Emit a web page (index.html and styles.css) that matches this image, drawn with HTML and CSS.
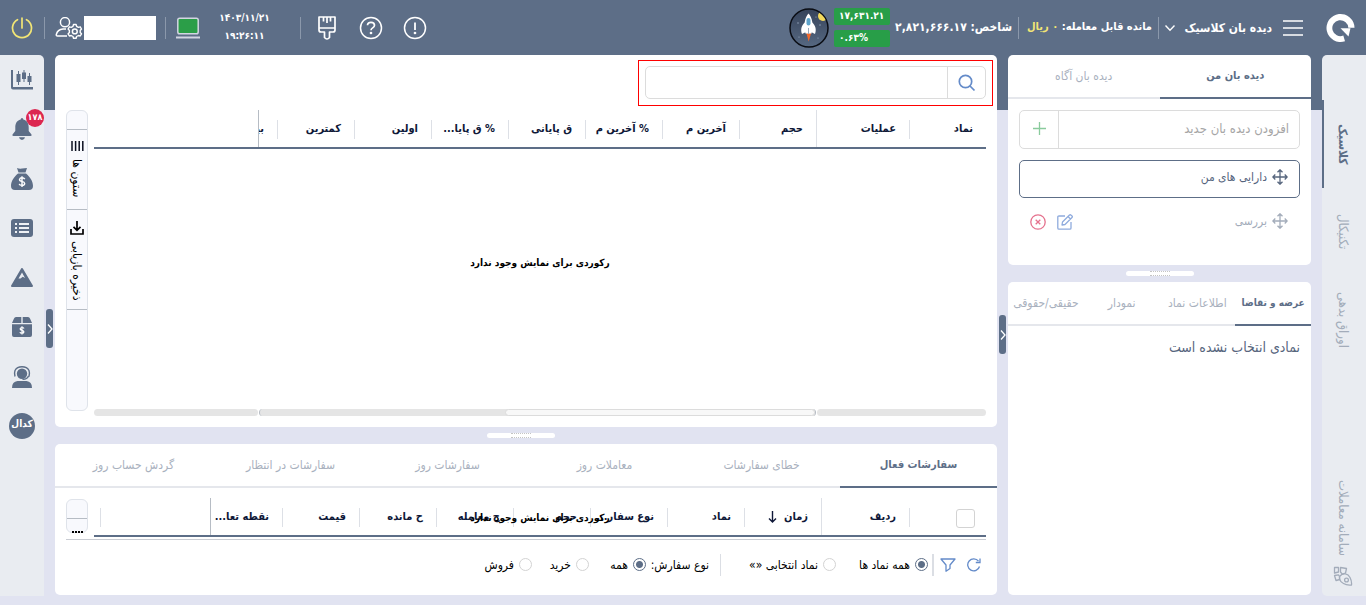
FILE: index.html
```
<!DOCTYPE html>
<html lang="fa" dir="rtl">
<head>
<meta charset="utf-8">
<meta name="viewport" content="width=device-width, initial-scale=1">
<title>دیده بان کلاسیک</title>
<link rel="stylesheet" href="styles.css">
</head>
<body>
<div class="app">
  <header class="topbar">
    <a class="logo" href="#" aria-label="آگاه">
      <svg width="30" height="30" viewBox="0 0 30 30" fill="#fff"><path d="M20 28.200A14 14 0 1 1 29.500 14.800L23.300 14.800A8 8 0 1 0 18.300 22.600Z"/><path d="M15.500 15.300H25.500L23.500 23.500Z"/></svg>
    </a>
    <button class="icon-btn menu" aria-label="منو"><svg width="20" height="18" viewBox="0 0 20 18" stroke="#fff" stroke-width="1.600"><path d="M0 2H20M0 9H20M0 16H20"/></svg></button>
    <button class="view-select">دیده بان کلاسیک<svg width="12" height="8" viewBox="0 0 12 8" fill="none" stroke="#fff" stroke-width="1.400"><path d="M1.500 1.500 6 6.200 10.500 1.500"/></svg></button>
    <div class="balance">مانده قابل معامله: <span class="amount">۰ ریال</span></div>
    <div class="index">شاخص: ۲,۸۲۱,۶۶۶.۱۷</div>
    <div class="badges"><span class="badge">۱۷,۶۳۱.۲۱</span><span class="badge">۰.۶۳%</span></div>
    <svg class="rocket" width="40" height="40" viewBox="0 0 40 40"><defs><linearGradient id="sky" x2="0" y2="1"><stop offset="0" stop-color="#36435a"/><stop offset="1" stop-color="#566881"/></linearGradient><clipPath id="disc"><circle cx="20" cy="20" r="18.500"/></clipPath></defs><circle cx="20" cy="20" r="19" fill="url(#sky)" stroke="#0a0d14" stroke-width="1.500"/><circle cx="34" cy="8" r="5" fill="#f3d95b" clip-path="url(#disc)"/><g fill="#9fb0c6"><circle cx="9" cy="15" r=".7"/><circle cx="27" cy="9" r=".6"/><circle cx="31" cy="17" r=".7"/><circle cx="29" cy="30" r=".6"/><circle cx="10" cy="29" r=".6"/></g><path d="M17.300 25H22.200L19.700 33.500Z" fill="#f0682c"/><path d="M16.500 14C12 17.500 11.500 22 13 26L17 24ZM22.500 14C27 17.500 27.500 22 26 26L22 24Z" fill="#fff"/><path d="M19.500 5.500C23.500 10 24.500 17 22.500 25.500H16.500C14.500 17 15.500 10 19.500 5.500Z" fill="#fff"/><rect x="17.500" y="10" width="4" height="7.500" rx="2" fill="#5fa4cb"/><path d="M19.500 20V26" stroke="#9aa8ba"/></svg>
    <div class="tools">
      <button class="icon-btn" aria-label="اعلان"><svg width="24" height="24" viewBox="0 0 24 24" fill="none" stroke="#fff" stroke-width="1.500"><circle cx="12" cy="12" r="10.500"/><path d="M12 6.500V14" stroke-width="1.800"/><circle cx="12" cy="17" r=".6" fill="#fff"/></svg></button>
      <button class="icon-btn" aria-label="راهنما"><svg width="24" height="24" viewBox="0 0 24 24" fill="none" stroke="#fff" stroke-width="1.500"><circle cx="12" cy="12" r="10.500"/><path d="M8.500 9.200C8.500 5.300 15.500 5.300 15.500 9.300C15.500 12 12 11.800 12 14.200" stroke-width="1.700"/><circle cx="12" cy="17" r=".6" fill="#fff"/></svg></button>
      <button class="icon-btn" aria-label="پوسته"><svg width="24" height="24" viewBox="0 0 24 24" fill="none" stroke="#fff" stroke-width="1.700" stroke-linejoin="round"><path d="M4 1H20V14Q20 16 18 16H14.500V21.500Q12 24.500 9.500 21.500V16H6Q4 16 4 14ZM4 12H20M8.500 1.500V5.500M12 1.500V7M15.500 1.500V5.500"/></svg></button>
    </div>
    <div class="clock"><span>۱۴۰۳/۱۱/۲۱</span><span>۱۹:۲۶:۱۱</span></div>
    <div class="account">
      <svg width="26" height="22" viewBox="0 0 26 22"><rect x="2.800" y="1.300" width="20.400" height="15.400" rx="1.800" fill="#2b9e48" stroke="#d3d5e2" stroke-width="1.500"/><path d="M1 20.500H25" stroke="#d3d5e2" stroke-width="2"/></svg>
    </div>
    <div class="profile">
      <span class="name-box"></span>
      <svg width="28" height="22" viewBox="0 0 28 22" fill="none" stroke="#fff" stroke-width="1.500" stroke-linejoin="round"><ellipse cx="10" cy="5.200" rx="4.600" ry="4.600"/><path d="M12 19H2.500Q1 19 1.300 17.500Q2.500 12.500 8 12H11"/><path d="M18.500 7.500H21.100L21.600 9.300 23.400 10.300 25.200 9.800 26.500 12 25.200 13.400V15.400L26.500 16.800 25.200 19 23.400 18.500 21.600 19.500 21.100 21.300H18.500L18 19.500 16.200 18.500 14.400 19 13.100 16.800 14.400 15.400V13.400L13.100 12 14.400 9.800 16.200 10.300 18 9.300Z" stroke-width="1.400"/><circle cx="19.800" cy="14.400" r="2.400"/></svg>
    </div>
    <button class="icon-btn power" aria-label="خروج"><svg width="22" height="22" viewBox="0 0 22 22" fill="none" stroke="#f2e575" stroke-width="1.700" stroke-linecap="round"><path d="M11 1V11M6.500 2.700A9.500 9.500 0 1 0 15.500 2.700"/></svg></button>
  </header>

  <main class="workspace">
    <nav class="rail pages" aria-label="صفحات">
      <a class="page current" href="#">کلاسیک</a>
      <a class="page" href="#">تکنیکال</a>
      <a class="page" href="#">اوراق بدهی</a>
      <a class="page system" href="#"><svg width="20" height="20" viewBox="0 0 20 20" fill="none" stroke="#a3acba" stroke-width="1.300" stroke-linejoin="round"><path d="M7 10C10 6.500 15 7.500 17 11.500C18.300 14 18.800 16.500 18.500 19C15.500 19.300 12.500 18.800 10.500 17.500C6.500 15.500 5.800 12 7 10Z"/><circle cx="13.500" cy="14" r="1.900"/><path d="M7.500 1.500 13.500 2.500 12.500 7 9.300 8.200 7.500 6ZM1.500 1.500H5.500V6L1.500 7ZM1.500 9.500 5.500 8.800 6.500 10.500 6.700 13.500 3 14.500Z"/></svg><span>سامانه معاملات</span></a>
    </nav>

    <div class="column watch-column">
      <section class="card watchlists">
        <div class="tabs"><button class="tab on">دیده بان من</button><button class="tab">دیده بان آگاه</button></div>
        <div class="watch-body">
          <form class="add-form">
            <input class="add-input" type="text" placeholder="افزودن دیده بان جدید" aria-label="افزودن دیده بان جدید">
            <button class="add-btn" type="button" aria-label="افزودن"><svg width="13" height="13" viewBox="0 0 13 13" stroke="#8acb9d" stroke-width="1.300"><path d="M6.500 0V13M0 6.500H13"/></svg></button>
          </form>
          <div class="watch selected"><svg class="move" width="16" height="16" viewBox="0 0 16 16"><path d="M8 1V15M1 8H15M5.500 3.300 8 .8 10.500 3.300M5.500 12.700 8 15.200 10.500 12.700M3.300 5.500 .8 8 3.300 10.500M12.700 5.500 15.200 8 12.700 10.500"/></svg><span>دارایی های من</span></div>
          <div class="watch"><svg class="move" width="16" height="16" viewBox="0 0 16 16"><path d="M8 1V15M1 8H15M5.500 3.300 8 .8 10.500 3.300M5.500 12.700 8 15.200 10.500 12.700M3.300 5.500 .8 8 3.300 10.500M12.700 5.500 15.200 8 12.700 10.500"/></svg><span>بررسی</span>
            <div class="watch-actions">
              <button class="icon-btn" aria-label="ویرایش"><svg width="16" height="16" viewBox="0 0 16 16" fill="none" stroke="#8fabdd" stroke-width="1.300" stroke-linejoin="round"><path d="M8 2H2Q.8 2 .8 3.200V14Q.8 15.200 2 15.200H12.800Q14 15.200 14 14V8M5 11 5.500 8 12.500 1Q13.300 .4 14.200 1.300L15 2Q15.700 2.800 15 3.500L8 10.500ZM11 2.500 13.500 5"/></svg></button>
              <button class="icon-btn" aria-label="حذف"><svg width="16" height="16" viewBox="0 0 16 16" fill="none" stroke="#e5728e" stroke-width="1.300"><circle cx="8" cy="8" r="7.200"/><path d="M5.700 5.700 10.300 10.300M10.300 5.700 5.700 10.300"/></svg></button>
            </div>
          </div>
        </div>
      </section>
      <div class="splitter"><span class="grip"></span></div>
      <section class="card details">
        <div class="tabs"><button class="tab on">عرضه و تقاضا</button><button class="tab">اطلاعات نماد</button><button class="tab">نمودار</button><button class="tab">حقیقی/حقوقی</button></div>
        <p class="details-empty">نمادی انتخاب نشده است</p>
      </section>
      <button class="fold fold-watch" aria-label="جمع کردن دیده بان"><svg width="6" height="12" viewBox="0 0 6 12"><path d="M1 1.500 5 6 1 10.500"/></svg></button>
    </div>

    <div class="column market-column">
      <section class="card market">
        <div class="search-frame">
          <form class="search">
            <button class="search-btn" type="button" aria-label="جستجو"><svg width="18" height="18" viewBox="0 0 18 18" fill="none" stroke="#648bc9" stroke-width="1.700"><circle cx="7.500" cy="7.500" r="6.200"/><path d="M12 12 16.500 16.500"/></svg></button>
            <input class="search-input" type="text" aria-label="جستجوی نماد">
          </form>
        </div>
        <div class="grid-area">
          <div class="grid-main">
            <table class="grid market-grid">
              <colgroup><col class="c77"><col class="c93"><col class="c77"><col class="c77"><col class="c77"><col class="c77"><col class="c77"><col class="c77"><col class="c77"><col class="c19"><col></colgroup>
              <thead><tr><th>نماد</th><th class="pin-end">عملیات</th><th>حجم</th><th>آخرین م</th><th>% آخرین م</th><th>ق پایانی</th><th>% ق پایا...</th><th>اولین</th><th>کمترین</th><th class="pin-start">بیشترین</th><th class="bare"></th></tr></thead>
            </table>
            <p class="empty">رکوردی برای نمایش وجود ندارد</p>
            <div class="scrolls"><span class="track first"></span><span class="track mid"><span class="thumb"></span></span><span class="track last"></span></div>
          </div>
          <div class="side-tools">
            <button class="side-btn columns-btn"><svg width="13" height="10" viewBox="0 0 13 10" stroke="#0b1020" stroke-width="1.500"><path d="M1 0V10M4.600 0V10M8.200 0V10M11.800 0V10"/></svg><span>ستون ها</span></button>
            <button class="side-btn save-btn"><svg width="14" height="14" viewBox="0 0 14 14" fill="none" stroke="#000" stroke-width="1.700"><path d="M7 0V9M3.500 5.800 7 9.300 10.500 5.800M1 8V13H13V8"/></svg><span>ذخیره بازیابی</span></button>
          </div>
        </div>
      </section>
      <div class="splitter shifted"><span class="grip"></span></div>
      <section class="card orders">
        <div class="tabs"><button class="tab on">سفارشات فعال</button><button class="tab">خطای سفارشات</button><button class="tab">معاملات روز</button><button class="tab">سفارشات روز</button><button class="tab">سفارشات در انتظار</button><button class="tab">گردش حساب روز</button></div>
        <div class="orders-area">
          <div class="grid-main">
            <table class="grid orders-grid">
              <colgroup><col class="c77"><col class="c88"><col class="c77"><col class="c77"><col class="c77"><col class="c77"><col class="c77"><col class="c77"><col class="c77"><col class="c72"><col><col class="c6"></colgroup>
              <thead><tr><th><input class="check" type="checkbox" aria-label="انتخاب همه"></th><th class="pin-end">ردیف</th><th>زمان <svg class="sort" width="9" height="12" viewBox="0 0 9 12"><path d="M4.500 0V11M1 7.500 4.500 11 8 7.500"/></svg></th><th>نماد</th><th>نوع سفار...</th><th>حجم</th><th>ح معامله</th><th>ح مانده</th><th>قیمت</th><th class="pin-start">نقطه تعا...</th><th></th><th class="bare"></th></tr></thead>
            </table>
            <span class="empty-over">رکوردی برای نمایش وجود ندارد</span>
          </div>
          <div class="side-tools small"><span class="dots"></span></div>
        </div>
        <div class="filters">
          <button class="icon-btn" aria-label="بروزرسانی"><svg width="14" height="14" viewBox="0 0 14 14" fill="none" stroke="#648bc9" stroke-width="1.300"><path d="M12.500 8.500A6 6 0 1 1 11.500 3.200M13 .5V4.500H8.800"/></svg></button>
          <button class="icon-btn" aria-label="فیلتر"><svg width="16" height="14" viewBox="0 0 16 14" fill="none" stroke="#648bc9" stroke-width="1.300" stroke-linejoin="round"><path d="M1 1H15L10 7V10.500L6 13.200V7Z"/></svg></button>
          <span class="bar thick"></span>
          <label class="choice w-all"><input type="radio" name="symbols" checked>همه نماد ها</label>
          <label class="choice w-picked"><input type="radio" name="symbols">نماد انتخابی «»</label>
          <span class="bar"></span>
          <span class="kind">نوع سفارش:</span>
          <label class="choice w-kind"><input type="radio" name="side" checked>همه</label>
          <label class="choice w-kind"><input type="radio" name="side">خرید</label>
          <label class="choice w-kind"><input type="radio" name="side">فروش</label>
        </div>
      </section>
      <button class="fold fold-rail" aria-label="باز کردن منوی کناری"><svg width="6" height="12" viewBox="0 0 6 12"><path d="M1 1.500 5 6 1 10.500"/></svg></button>
    </div>

    <nav class="rail shortcuts" aria-label="میانبرها">
      <button class="shortcut" aria-label="نمودار"><svg width="22" height="20" viewBox="0 0 22 20" fill="#5d6e87"><path d="M0 0H2V17H22V19.500H2Q0 19.500 0 17.500Z"/><path d="M7 1H8V4H9.500V12H8V15H7V12H5.500V4H7ZM12.500 0H13.500V2.500H15V9H13.500V12H12.500V9H11V2.500H12.500ZM18 3H19V6H20.500V12H19V15H18V12H16.500V6H18Z"/></svg></button>
      <button class="shortcut bell" aria-label="پیام ها"><svg width="20" height="22" viewBox="0 0 20 22" fill="#5d6e87"><path d="M10 0Q11.300 0 11.300 1.500C15.500 2.500 16.700 6 16.700 9.500V13L19.500 16.500Q20 18 18.500 18H1.500Q0 18 .5 16.500L3.300 13V9.500C3.300 6 4.500 2.500 8.700 1.500Q8.700 0 10 0ZM7 19.300H13Q12.500 22 10 22T7 19.300Z"/></svg><span class="count">۱۷۸</span></button>
      <button class="shortcut" aria-label="واریز و برداشت"><svg width="22" height="22" viewBox="0 0 22 22" fill="#5d6e87"><path d="M6 0Q8.500 1 11 .5T16 0L14.500 4.500H7.500ZM7 5.500H15C19 9 22 13 22 18Q22 22 18 22H4Q0 22 0 18C0 13 3 9 7 5.500Z"/><path d="M13.800 11.200Q13 9.800 11 9.800T8.500 11.500Q8.500 13 11 13.400T13.700 15.600Q13.500 17.400 11 17.400T8.200 15.900M11 8.300V19" fill="none" stroke="#fff" stroke-width="1.400"/></svg></button>
      <button class="shortcut" aria-label="فهرست"><svg width="22" height="18" viewBox="0 0 22 18"><rect width="22" height="18" rx="3" fill="#5d6e87"/><path d="M4 5H6M4 9H6M4 13H6M8 5H18M8 9H18M8 13H18" stroke="#eef1f5" stroke-width="1.800"/></svg></button>
      <button class="shortcut" aria-label="قله"><svg width="22" height="20" viewBox="0 0 22 20"><path d="M11 1 21 18H1Z" fill="#5d6e87" stroke="#5d6e87" stroke-width="2" stroke-linejoin="round"/><path d="M11 4.500 14 10 11.800 8.800 9.500 10.500 7.500 10.500Z" fill="#e9ecf1"/></svg></button>
      <button class="shortcut" aria-label="صندوق"><svg width="20" height="20" viewBox="0 0 20 20" fill="#5d6e87"><path d="M4 0H9.300V6H0L2 1.500Q2.500 0 4 0ZM10.700 0H16Q17.500 0 18 1.500L20 6H10.700ZM0 7.200H20V18Q20 20 18 20H2Q0 20 0 18Z"/><path d="M12 11.500Q11.500 10.500 10 10.500T8.100 11.900Q8.200 13 10 13.300T11.900 14.900Q11.800 16.200 10 16.200T7.900 15.100M10 9.300V17.500" fill="none" stroke="#fff" stroke-width="1.200"/></svg></button>
      <button class="shortcut" aria-label="پشتیبانی"><svg width="20" height="22" viewBox="0 0 20 22" fill="#5d6e87"><circle cx="10" cy="7.800" r="5.200"/><path d="M3 10.500Q2 7 3 4.500Q5 .8 10 .8T17 4.500Q18 7 17 10.500M16.500 10Q15 13.500 10.500 13.300" fill="none" stroke="#5d6e87" stroke-width="1.400"/><path d="M5.500 15H14.500Q20 15.500 20 22H0Q0 15.500 5.500 15Z"/></svg></button>
      <button class="shortcut"><span class="codal">کدال</span></button>
    </nav>
  </main>
</div>
</body>
</html>
```
FILE: styles.css
```
* { box-sizing: border-box; }

:root {
  --slate: #5d6e87;
  --muted: #a9b1be;
  --line: #e5e7ec;
  --ink: #0f1838;
}

body {
  margin: 0;
  background: linear-gradient(var(--slate) 110px, #e1e3f1 110px) no-repeat #e1e3f1;
  color: var(--ink);
  font: 12px/18px "DejaVu Sans Condensed", "DejaVu Sans", sans-serif;
}

button, input { font: inherit; color: inherit; }
button { background: none; border: 0; padding: 0; cursor: pointer; }
svg { display: block; flex: none; }
p { margin: 0; }

.app { display: flex; flex-direction: column; min-height: 100vh; padding-bottom: 9px; }

/* Top bar */
.topbar { display: flex; align-items: center; height: 55px; color: #fff; font-weight: 700; font-size: 12px; white-space: nowrap; }
.icon-btn { display: flex; align-items: center; justify-content: center; }
.logo { margin-right: 11px; }
.menu { margin-right: 22px; }
.view-select { display: flex; align-items: center; justify-content: space-between; width: 108px; margin-right: 11px; }
.balance, .index { border-right: 1px solid #8b98ab; height: 22px; line-height: 20px; }
.balance { width: 140px; margin-right: 5px; padding-right: 6px; font-size: 11px; }
.amount { color: #f2e575; }
.index { width: 124px; padding-right: 6px; }
.badges { display: flex; flex-direction: column; gap: 5px; width: 56px; margin-right: 5px; }
.badge { height: 17px; padding: 0 5px; border-radius: 2px; background: #289e48; font-size: 10px; line-height: 16px; text-align: left; }
.rocket { margin-right: 5px; }
.tools { display: flex; gap: 20px; margin-right: auto; padding-left: 14px; }
.clock { display: flex; flex-direction: column; align-items: center; justify-content: center; width: 100px; height: 22px; border-right: 1px solid #8b98ab; padding: 0 12px 2px 0; font-size: 10px; }
.account { display: flex; align-items: center; height: 22px; margin-left: 9px; }
.profile { display: flex; align-items: center; gap: 1px; height: 22px; border-right: 1px solid #8b98ab; border-left: 1px solid #8b98ab; padding: 0 9px 0 10px; }
.name-box { width: 72px; height: 24px; background: #fff; }
.power { margin: 0 11px; }

/* Workspace */
.workspace { flex: 1; display: grid; grid-template-columns: 44px 303px minmax(0, 1fr) 44px; column-gap: 11px; }
.rail { background: #e9ecf1; }
.column { position: relative; display: flex; flex-direction: column; margin-bottom: 1px; }
.card { background: #fff; border-radius: 5px; }
.splitter { display: flex; align-items: center; justify-content: center; height: 17px; }
.shifted { padding-right: 10px; }
.grip { display: flex; align-items: center; justify-content: center; width: 68px; height: 5px; border-radius: 3px; background: #fff; }
.grip::after { content: ""; width: 20px; height: 3px; border: dotted #c4c4c4; border-width: 1px 0; }
.fold { position: absolute; display: flex; align-items: center; justify-content: center; width: 7px; height: 39px; border-radius: 3px; background: var(--slate); }
.fold path { fill: none; stroke: #fff; stroke-width: 1.3; }
.fold-watch { left: -9px; top: 260px; }
.fold-rail { left: -9px; top: 254px; }

/* Page rail */
.pages { display: flex; flex-direction: column; border-radius: 5px 0 0 5px; padding-top: 45px; }
.page { display: flex; align-items: center; justify-content: center; writing-mode: vertical-rl; width: 44px; height: 88px; color: #a3acba; font-size: 13px; text-decoration: none; white-space: nowrap; border-left: 2px solid transparent; padding-right: 4px; }
.current { border-left-color: var(--slate); color: var(--slate); font-size: 12px; font-weight: 700; }
.system { justify-content: flex-start; height: auto; margin-top: auto; gap: 10px; padding-bottom: 10px; }

/* Tabs */
.tabs { display: flex; height: 44px; }
.tab { flex: 1 1 0; min-width: 0; border-bottom: 2px solid var(--line); color: var(--muted); padding-bottom: 1px; white-space: nowrap; }
.tab.on { border-bottom-color: var(--slate); color: var(--slate); font-size: 11px; font-weight: 700; }

/* Watchlists */
.watchlists { min-height: 210px; }
.watch-body { padding: 11px; }
.add-form { display: flex; height: 39px; border: 1px solid #dcdcdc; border-radius: 5px; margin-bottom: 11px; }
.add-input { flex: 1; min-width: 0; border: 0; border-left: 1px solid #dcdcdc; background: none; padding: 0 10px 2px; font-size: 13px; }
.add-input::placeholder { color: #a6a6a6; opacity: 1; }
.add-btn { display: flex; align-items: center; justify-content: center; width: 38px; padding-bottom: 2px; }
.watch { display: flex; align-items: center; gap: 5px; height: 38px; padding: 0 11px 4px 10px; color: #a3acba; border: 1px solid transparent; border-radius: 5px; }
.watch + .watch { margin-top: 6px; }
.selected { border-color: var(--slate); color: #56657d; }
.move path { fill: none; stroke: currentColor; stroke-width: 1.3; }
.watch-actions { display: flex; gap: 11px; margin-right: auto; padding-top: 2px; }
.details { flex: 1; }
.details .tab.on { font-size: 10px; }
.details-empty { padding: 12px 11px; font-size: 14px; color: #56657d; }

/* Market grid */
.market { flex: 1; display: flex; flex-direction: column; padding: 5px 0 16px; }
.search-frame { align-self: flex-start; width: 355px; margin-right: 4px; border: 1px solid #f00; padding: 5px 6px 6px; }
.search { display: flex; height: 33px; border: 1px solid #dcdcdc; border-radius: 5px; }
.search-btn { display: flex; align-items: center; justify-content: center; width: 38px; border-left: 1px solid #dcdcdc; }
.search-input { flex: 1; min-width: 0; border: 0; background: none; padding: 0 10px; }
.grid-area { flex: 1; display: flex; gap: 6px; padding: 4px 11px 0; }
.grid-main { position: relative; flex: 1; min-width: 0; display: flex; flex-direction: column; }
.grid { width: 100%; table-layout: fixed; border-collapse: separate; border-spacing: 0; }
.grid th { position: relative; height: 39px; padding: 0 13px 0 2px; border-bottom: 2px solid var(--slate); font-size: 11px; font-weight: 700; text-align: right; white-space: nowrap; overflow: hidden; }
.grid th::after { content: ""; position: absolute; left: 0; top: 10px; height: 19px; border-left: 1px solid #dde0e6; }
.grid .pin-end::after { top: 0; height: 100%; }
.grid .pin-start::after { top: 0; height: 100%; border-color: #b6bcc4; }
.grid .bare::after { display: none; }
.c77 { width: 77px; } .c93 { width: 93px; } .c88 { width: 88px; } .c72 { width: 72px; } .c19 { width: 19px; } .c6 { width: 6px; }
.empty { flex: 1; display: flex; align-items: center; justify-content: center; padding-bottom: 35px; font-weight: 700; font-size: 10px; color: #000; }
.scrolls { display: flex; height: 7px; margin-bottom: -5px; margin-top: -2px; }
.track { height: 7px; border-radius: 4px; background: #e5e5e5; }
.first { width: 169px; }
.mid { flex: 1; margin: 0 1px; }
.last { width: 164px; }
.mid { border: solid #b6bcc4; border-width: 0 1px; }
.thumb { display: block; width: 310px; height: 7px; border: 1px solid #dcdcdc; border-radius: 4px; background: #f8f8f8; }
.side-tools { display: flex; flex-direction: column; width: 22px; padding-top: 18px; border: 1px solid #dfe3ea; border-radius: 6px; background: #f8f9fd; }
.side-btn { display: flex; flex-direction: row-reverse; align-items: center; justify-content: flex-start; writing-mode: vertical-rl; gap: 8px; border-bottom: 1px solid #b6bcc4; padding-top: 11px; color: #000; white-space: nowrap; }
.columns-btn { height: 81px; border-top: 1px solid #b6bcc4; }
.save-btn { height: 100px; gap: 6px; }

/* Orders */
.orders-area { display: flex; gap: 6px; margin: 0 11px; padding: 10px 0 2px; border-bottom: 1px solid #c9ccd3; }
.empty-over { position: absolute; top: 11px; left: 0; right: 0; text-align: center; font-size: 10px; font-weight: 700; color: #000; }
.check { appearance: none; display: block; width: 19px; height: 19px; margin: 3px -2px 0 0; border: 1px solid #d3d3d3; border-radius: 3px; background: #fff; }
.sort { display: inline-block; vertical-align: middle; margin-right: 4px; }
.sort path { fill: none; stroke: var(--ink); stroke-width: 1.4; }
.small { height: 34px; margin-top: 1px; }
.dots { border-top: 1px solid #b6bcc4; padding: 12px 4px 0; }
.dots::after { content: ""; display: block; height: 2px; background: repeating-linear-gradient(270deg, #000 0 2px, transparent 2px 3px); }
.filters { display: flex; align-items: center; height: 55px; padding: 0 16px 6px 0; color: #000; white-space: nowrap; }
.filters .icon-btn + .icon-btn { margin-right: 11px; }
.bar { width: 1px; height: 22px; background: #dbdee4; }
.thick { width: 2px; margin: 0 6px 0 4px; }
.choice { display: flex; align-items: center; gap: 5px; }
.choice input { appearance: none; flex: none; width: 13px; height: 13px; margin: 0; border: 1px solid #d3d3d3; border-radius: 50%; background: #fff; }
.choice input:checked { border-color: var(--slate); background: radial-gradient(circle, var(--slate) 3px, #fff 4px); }
.w-all { width: 92px; }
.w-picked { width: 115px; }
.kind { width: 74px; padding-right: 11px; }
.w-kind { width: 57px; }

/* Shortcut rail */
.shortcuts { display: grid; grid-template-rows: repeat(8, 1fr); padding-bottom: 145px; border-radius: 0 5px 0 0; }
.shortcut { position: relative; display: flex; align-items: center; justify-content: center; }
.count { position: absolute; right: 0; top: 4px; width: 18px; height: 18px; border-radius: 50%; background: #dc2750; color: #fff; font-size: 9px; font-weight: 700; line-height: 16px; text-align: center; }
.codal { width: 26px; height: 26px; border-radius: 50%; background: var(--slate); color: #fff; font-size: 10px; font-weight: 700; line-height: 22px; }
```
